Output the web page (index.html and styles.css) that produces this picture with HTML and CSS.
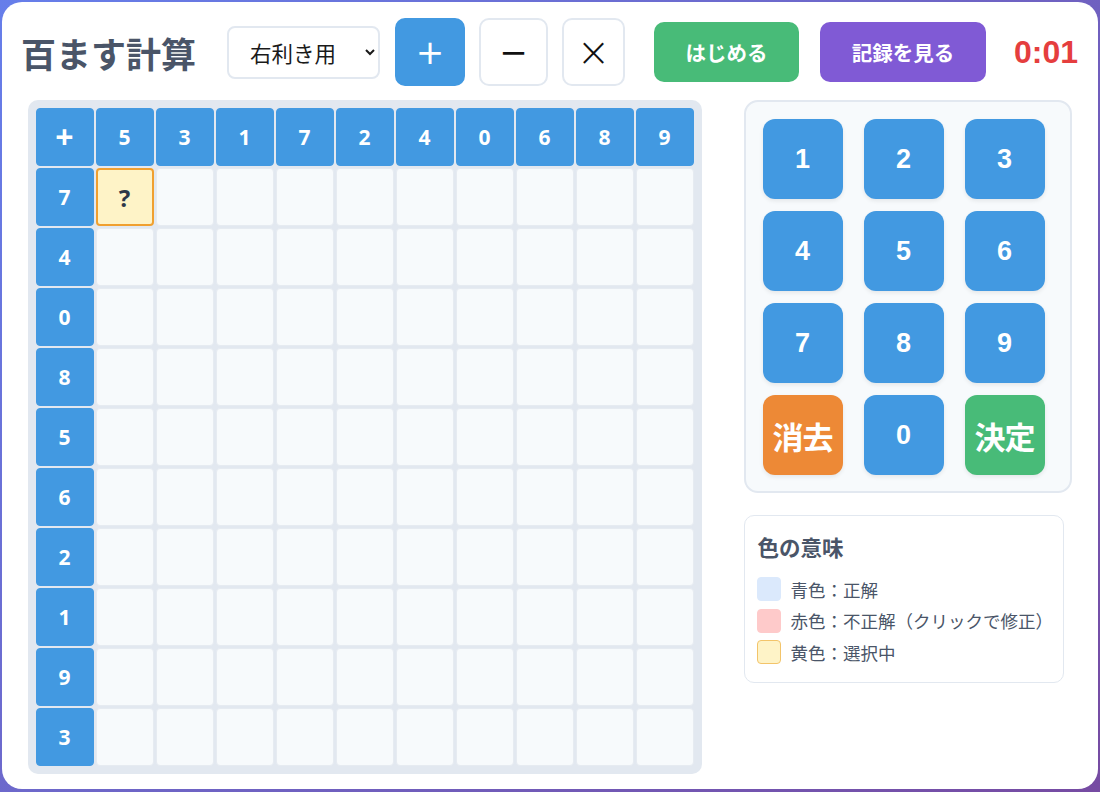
FILE: index.html
```html
<!DOCTYPE html>
<html lang="ja">
<head>
<meta charset="utf-8">
<title>百ます計算</title>
<link rel="stylesheet" href="styles.css">
</head>
<body>
<div class="app">
  <header class="topbar">
    <h1 class="title">百ます計算</h1>
    <select class="hand-select">
      <option>右利き用</option>
      <option>左利き用</option>
    </select>
    <div class="ops">
      <button class="op op-plus active">+</button>
      <button class="op op-minus">−</button>
      <button class="op op-times">×</button>
    </div>
    <button class="action start">はじめる</button>
    <button class="action record">記録を見る</button>
    <div class="timer">0:01</div>
  </header>

  <main class="main">
    <div class="board">
      <div class="cell head corner">+</div>
      <div class="cell head">5</div><div class="cell head">3</div><div class="cell head">1</div><div class="cell head">7</div><div class="cell head">2</div><div class="cell head">4</div><div class="cell head">0</div><div class="cell head">6</div><div class="cell head">8</div><div class="cell head">9</div>

      <div class="cell head">7</div>
      <div class="cell selected">?</div><div class="cell"></div><div class="cell"></div><div class="cell"></div><div class="cell"></div><div class="cell"></div><div class="cell"></div><div class="cell"></div><div class="cell"></div><div class="cell"></div>

      <div class="cell head">4</div>
      <div class="cell"></div><div class="cell"></div><div class="cell"></div><div class="cell"></div><div class="cell"></div><div class="cell"></div><div class="cell"></div><div class="cell"></div><div class="cell"></div><div class="cell"></div>

      <div class="cell head">0</div>
      <div class="cell"></div><div class="cell"></div><div class="cell"></div><div class="cell"></div><div class="cell"></div><div class="cell"></div><div class="cell"></div><div class="cell"></div><div class="cell"></div><div class="cell"></div>

      <div class="cell head">8</div>
      <div class="cell"></div><div class="cell"></div><div class="cell"></div><div class="cell"></div><div class="cell"></div><div class="cell"></div><div class="cell"></div><div class="cell"></div><div class="cell"></div><div class="cell"></div>

      <div class="cell head">5</div>
      <div class="cell"></div><div class="cell"></div><div class="cell"></div><div class="cell"></div><div class="cell"></div><div class="cell"></div><div class="cell"></div><div class="cell"></div><div class="cell"></div><div class="cell"></div>

      <div class="cell head">6</div>
      <div class="cell"></div><div class="cell"></div><div class="cell"></div><div class="cell"></div><div class="cell"></div><div class="cell"></div><div class="cell"></div><div class="cell"></div><div class="cell"></div><div class="cell"></div>

      <div class="cell head">2</div>
      <div class="cell"></div><div class="cell"></div><div class="cell"></div><div class="cell"></div><div class="cell"></div><div class="cell"></div><div class="cell"></div><div class="cell"></div><div class="cell"></div><div class="cell"></div>

      <div class="cell head">1</div>
      <div class="cell"></div><div class="cell"></div><div class="cell"></div><div class="cell"></div><div class="cell"></div><div class="cell"></div><div class="cell"></div><div class="cell"></div><div class="cell"></div><div class="cell"></div>

      <div class="cell head">9</div>
      <div class="cell"></div><div class="cell"></div><div class="cell"></div><div class="cell"></div><div class="cell"></div><div class="cell"></div><div class="cell"></div><div class="cell"></div><div class="cell"></div><div class="cell"></div>

      <div class="cell head">3</div>
      <div class="cell"></div><div class="cell"></div><div class="cell"></div><div class="cell"></div><div class="cell"></div><div class="cell"></div><div class="cell"></div><div class="cell"></div><div class="cell"></div><div class="cell"></div>
    </div>

    <aside class="side">
      <div class="keypad">
        <button class="key">1</button>
        <button class="key">2</button>
        <button class="key">3</button>
        <button class="key">4</button>
        <button class="key">5</button>
        <button class="key">6</button>
        <button class="key">7</button>
        <button class="key">8</button>
        <button class="key">9</button>
        <button class="key key-clear">消去</button>
        <button class="key">0</button>
        <button class="key key-enter">決定</button>
      </div>

      <div class="legend">
        <h2 class="legend-title">色の意味</h2>
        <div class="legend-item"><span class="swatch swatch-blue"></span>青色：正解</div>
        <div class="legend-item"><span class="swatch swatch-red"></span>赤色：不正解（クリックで修正）</div>
        <div class="legend-item"><span class="swatch swatch-yellow"></span>黄色：選択中</div>
      </div>
    </aside>
  </main>
</div>
</body>
</html>
```

FILE: styles.css
```css
* {
  box-sizing: border-box;
}

html, body {
  margin: 0;
  padding: 0;
}

body {
  width: 1100px;
  height: 792px;
  overflow: hidden;
  background: linear-gradient(135deg, #667eea 0%, #764ba2 100%);
  font-family: "Noto Sans CJK JP", "Noto Sans", sans-serif;
  color: #4a5568;
  padding: 2px 2px 3px 2px;
}

.app {
  height: 787px;
  background: #ffffff;
  border-radius: 20px;
  padding: 16px 20px 15px 19px;
}

/* ---------- header ---------- */
.topbar {
  display: flex;
  align-items: center;
  height: 68px;
}

.title {
  margin: 0;
  font-size: 35px;
  font-weight: 700;
  color: #4a5568;
  line-height: 1;
  white-space: nowrap;
}

.hand-select {
  margin-left: 31px;
  width: 153px;
  height: 53px;
  border: 2px solid #e2e8f0;
  border-radius: 8px;
  background: #ffffff;
  font-family: "Noto Sans CJK JP", sans-serif;
  font-size: 21.5px;
  color: #1a1a1a;
  padding: 0 6px 0 17px;
}

.ops {
  display: flex;
  gap: 14px;
  margin-left: 15px;
}

.op {
  height: 68px;
  border: 2px solid #e2e8f0;
  border-radius: 10px;
  background: #ffffff;
  color: #111111;
  font-family: "DejaVu Sans", sans-serif;
  font-size: 34px;
  line-height: 1;
  padding: 0;
}

.op-plus { width: 70px; }
.op-minus { width: 69px; }
.op-times { width: 63px; font-size: 40px; font-weight: 300; }

.op.active {
  background: #4299e1;
  border-color: #4299e1;
  color: #ffffff;
}

.action {
  height: 60px;
  border: none;
  border-radius: 10px;
  color: #ffffff;
  font-family: "Noto Sans CJK JP", sans-serif;
  font-size: 20.5px;
  font-weight: 700;
  padding: 0;
}

.start {
  margin-left: 29px;
  width: 145px;
  background: #48bb78;
}

.record {
  margin-left: 21px;
  width: 166px;
  background: #805ad5;
}

.timer {
  margin-left: 28px;
  font-family: "Liberation Sans", Arial, sans-serif;
  font-size: 32px;
  font-weight: 700;
  color: #e53e3e;
}

/* ---------- main ---------- */
.main {
  display: flex;
  justify-content: center;
  align-items: flex-start;
  gap: 42px;
  margin-top: 14px;
}

.board {
  display: grid;
  grid-template-columns: repeat(11, 58px);
  grid-auto-rows: 58px;
  gap: 2px;
  padding: 8px;
  background: #e2e8f0;
  border-radius: 10px;
}

.cell {
  display: flex;
  align-items: center;
  justify-content: center;
  background: #f7fafc;
  border: 1px solid #e6ebf1;
  border-radius: 4px;
  font-family: "Noto Sans", "Open Sans", sans-serif;
  font-size: 21px;
  font-weight: 700;
  color: #2d3748;
}

.cell.head {
  background: #4299e1;
  border-color: #4299e1;
  color: #ffffff;
}

.cell.corner {
  font-size: 32px;
  line-height: 1;
}

.cell.selected {
  background: #fef3c7;
  border: 2px solid #f0a030;
  font-size: 24px;
}

/* ---------- side ---------- */
.side {
  display: flex;
  flex-direction: column;
  gap: 22px;
}

.keypad {
  width: 328px;
  display: grid;
  grid-template-columns: repeat(3, 1fr);
  column-gap: 12px;
  row-gap: 12px;
  padding: 17px 16px 16px 17px;
  background: #f7fafc;
  border: 2px solid #e2e8f0;
  border-radius: 14px;
}

.key {
  width: 80px;
  height: 80px;
  border: none;
  border-radius: 12px;
  background: #4299e1;
  color: #ffffff;
  font-family: "Liberation Sans", Arial, sans-serif;
  font-size: 27px;
  font-weight: 700;
  box-shadow: 0 2px 4px rgba(0, 0, 0, 0.08);
  padding: 0;
}

.key-clear,
.key-enter {
  font-family: "Noto Sans CJK JP", sans-serif;
  font-size: 31px;
  letter-spacing: -1px;
}

.key-clear { background: #ed8936; }
.key-enter { background: #48bb78; }

.legend {
  width: 320px;
  background: #ffffff;
  border: 1px solid #e2e8f0;
  border-radius: 10px;
  padding: 16px 12px 18px 12px;
}

.legend-title {
  margin: 0 0 15px 1px;
  font-size: 21.5px;
  font-weight: 700;
  line-height: 30px;
  color: #4a5568;
}

.legend-item {
  display: flex;
  align-items: center;
  gap: 10px;
  height: 24px;
  margin-top: 7.5px;
  font-size: 17.5px;
  color: #4a5568;
  white-space: nowrap;
}

.legend-title + .legend-item {
  margin-top: 0;
}

.swatch {
  flex: none;
  width: 24px;
  height: 24px;
  border-radius: 4px;
  border: 1px solid transparent;
}

.swatch-blue { background: #dbe9fc; border-color: #dbe9fc; }
.swatch-red { background: #fecaca; border-color: #fecaca; }
.swatch-yellow { background: #fef3c7; border-color: #f3c46a; }
```
